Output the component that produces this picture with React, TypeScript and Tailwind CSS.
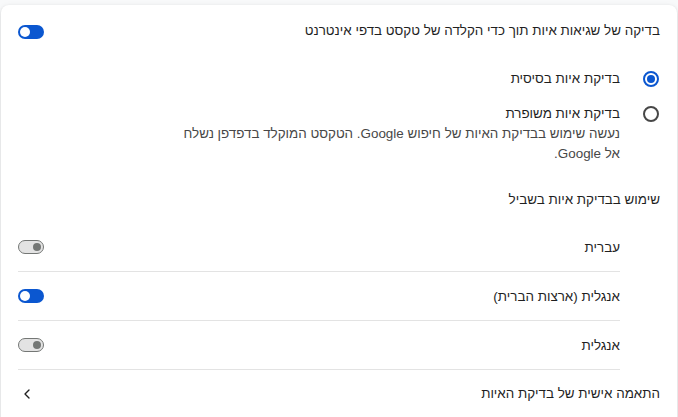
import { ChevronLeft } from 'lucide-react'

function Toggle({ on }: { on: boolean }) {
  if (on) {
    return (
      <div className="w-[26px] h-[14px] rounded-full bg-[#0b57d0] flex items-center justify-end px-[2px] shrink-0">
        <div className="w-[10px] h-[10px] rounded-full bg-white" />
      </div>
    )
  }
  return (
    <div className="w-[26px] h-[14px] rounded-full bg-[#e3e3e3] border border-[#747775] flex items-center justify-start px-[2px] shrink-0">
      <div className="w-[8px] h-[8px] rounded-full bg-[#747775]" />
    </div>
  )
}

function Radio({ checked }: { checked: boolean }) {
  return (
    <div
      className={`w-[16px] h-[16px] rounded-full border-2 flex items-center justify-center shrink-0 ${
        checked ? 'border-[#0b57d0]' : 'border-[#474747]'
      }`}
    >
      {checked && <div className="w-[8px] h-[8px] rounded-full bg-[#0b57d0]" />}
    </div>
  )
}

const languages = [
  { name: 'עברית', on: false },
  { name: 'אנגלית (ארצות הברית)', on: true },
  { name: 'אנגלית', on: false },
]

export default function App() {
  return (
    <div
      dir="rtl"
      className="w-[678px] h-[417px] overflow-hidden bg-[#f8f9fa] pt-[5px] px-[1px] text-[13.4px] text-[#1f1f1f]"
      style={{ fontFamily: '"Liberation Sans", Arial, sans-serif' }}
    >
      <div className="bg-white rounded-t-lg shadow-[0_1px_3px_rgba(0,0,0,0.12),0_1px_6px_rgba(0,0,0,0.06)] h-[420px] px-[17px]">
        <div className="h-[53px] flex items-center justify-between">
          <span>בדיקה של שגיאות איות תוך כדי הקלדה של טקסט בדפי אינטרנט</span>
          <Toggle on />
        </div>

        <div className="mt-[1px] h-[40px] flex items-center gap-[23px] pr-[1px]">
          <Radio checked />
          <span>בדיקת איות בסיסית</span>
        </div>

        <div className="mt-[5px] flex items-start gap-[23px] pr-[1px]">
          <div className="h-[20px] flex items-center">
            <Radio checked={false} />
          </div>
          <div className="leading-[20px]">
            <div>בדיקת איות משופרת</div>
            <div className="text-[#474747] w-[452px]">
              נעשה שימוש בבדיקת האיות של חיפוש Google. הטקסט המוקלד בדפדפן נשלח אל Google.
            </div>
          </div>
        </div>

        <div className="mt-[26px] leading-[20px]">שימוש בבדיקת איות בשביל</div>

        <div className="mt-[13px] pr-[40px]">
          {languages.map((l) => (
            <div
              key={l.name}
              className="h-[49px] flex items-center justify-between border-b border-[#e3e3e3]"
            >
              <span className="pt-[2px]">{l.name}</span>
              <Toggle on={l.on} />
            </div>
          ))}
        </div>

        <div className="h-[48px] flex items-center justify-between">
          <span>התאמה אישית של בדיקת האיות</span>
          <ChevronLeft className="w-[16px] h-[16px] text-[#1f1f1f] ml-[1px]" strokeWidth={2} />
        </div>
      </div>
    </div>
  )
}
